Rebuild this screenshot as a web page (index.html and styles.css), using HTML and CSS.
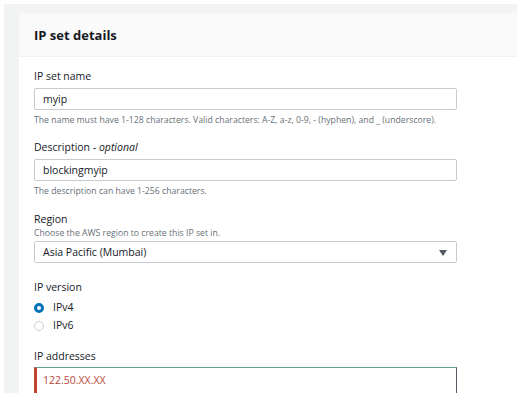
FILE: index.html
```html
<!DOCTYPE html>
<html>
<head>
<meta charset="utf-8">
<link rel="stylesheet" href="styles.css">
</head>
<body>
<div class="frame">
  <div class="panel">
    <div class="panel-header"><h2>IP set details</h2></div>
    <div class="panel-body">
      <div class="field">
        <div class="label">IP set name</div>
        <div class="input">myip</div>
        <div class="help">The name must have 1-128 characters. Valid characters: A-Z, a-z, 0-9, - (hyphen), and _ (underscore).</div>
      </div>
      <div class="field">
        <div class="label">Description - <i>optional</i></div>
        <div class="input">blockingmyip</div>
        <div class="help">The description can have 1-256 characters.</div>
      </div>
      <div class="field field-region">
        <div class="label">Region</div>
        <div class="help desc">Choose the AWS region to create this IP set in.</div>
        <div class="input select">Asia Pacific (Mumbai)<span class="caret"></span></div>
      </div>
      <div class="field field-version">
        <div class="label">IP version</div>
        <div class="radios">
          <div class="radio-row"><span class="radio checked"></span>IPv4</div>
          <div class="radio-row"><span class="radio"></span>IPv6</div>
        </div>
      </div>
      <div class="field field-addresses">
        <div class="label">IP addresses</div>
        <div class="textarea">122.50.XX.XX</div>
      </div>
    </div>
  </div>
</div>
</body>
</html>
```
FILE: styles.css
```css
html, body {
  margin: 0;
  padding: 0;
  background: #ffffff;
  font-family: "Open Sans", "Noto Sans", sans-serif;
  color: #16191f;
}
.frame {
  margin: 4px 14px 0 4px;
  height: 389px;
  background: #f2f3f3;
  padding: 9px 0 0 15px;
  box-sizing: border-box;
  overflow: hidden;
}
.panel {
  background: #ffffff;
  height: 380px;
  overflow: hidden;
}
.panel-header {
  background: #fafafa;
  height: 44px;
  padding-left: 15px;
  display: flex;
  align-items: center;
  border-bottom: 1px solid #f2f2f2;
  box-sizing: border-box;
}
.panel-header h2 {
  margin: 0;
  font-size: 13px;
  font-weight: 700;
  color: #16191f;
}
.panel-body {
  padding: 12px 0 0 15px;
  width: 423px;
  display: flex;
  flex-direction: column;
  gap: 14px;
}
.field {
  display: flex;
  flex-direction: column;
}
.field-region {
  margin-top: 1px;
}
.field-version {
  margin-top: 3px;
}
.field-addresses {
  margin-top: 2px;
}
.label {
  font-size: 10.5px;
  line-height: 15px;
  color: #16191f;
  margin-bottom: 4px;
}
.field-addresses .label {
  margin-bottom: 3px;
}
.input {
  height: 22px;
  border: 1px solid #c6cdce;
  border-radius: 2px;
  box-sizing: border-box;
  font-size: 10.5px;
  line-height: 20px;
  padding-left: 8px;
  color: #16191f;
  position: relative;
}
.help {
  font-size: 8.7px;
  line-height: 12px;
  color: #687078;
  margin-top: 4px;
}
.help.desc {
  margin-top: -4px;
  margin-bottom: 2px;
}
.select .caret {
  position: absolute;
  right: 9px;
  top: 8px;
  width: 0;
  height: 0;
  border-left: 4px solid transparent;
  border-right: 4px solid transparent;
  border-top: 6px solid #545b64;
}
.radios {
  display: flex;
  flex-direction: column;
  gap: 3px;
  margin-top: 1px;
}
.radio-row {
  display: flex;
  align-items: center;
  font-size: 10.5px;
  line-height: 15px;
  color: #16191f;
}
.radio {
  width: 10px;
  height: 10px;
  border-radius: 50%;
  border: 1px solid #c6cdce;
  margin-right: 9px;
  background: #fff;
  box-sizing: border-box;
}
.radio.checked {
  border: 3px solid #0073bb;
}
.textarea {
  height: 40px;
  border: 1px solid #545b64;
  border-top-color: #5fa395;
  border-left: 3px solid #c0462f;
  box-sizing: border-box;
  font-size: 10.5px;
  line-height: 20px;
  padding-left: 6px;
  padding-top: 2px;
  color: #b8483a;
}
```
